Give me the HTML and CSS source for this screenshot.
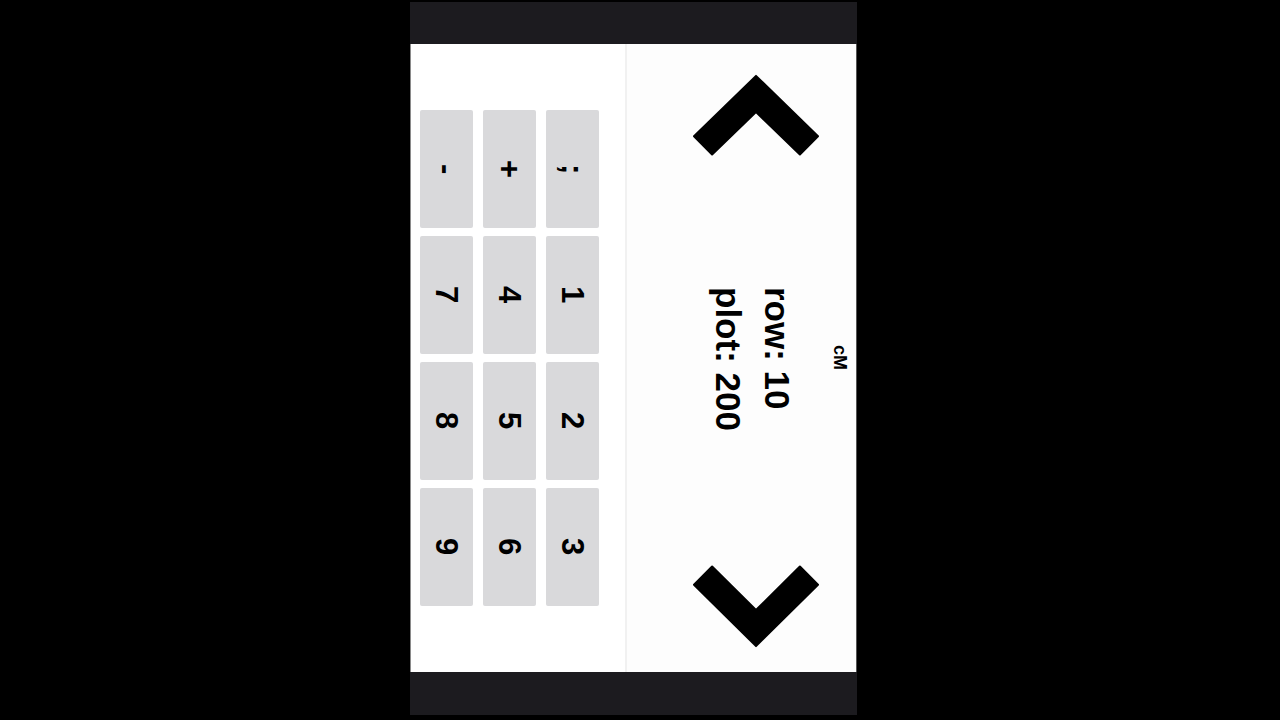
FILE: index.html
```html
<!DOCTYPE html>
<html>
<head>
<meta charset="utf-8">
<link rel="stylesheet" href="styles.css">
</head>
<body>
<div class="phone">
  <div class="bar bar-top"></div>
  <div class="screen">
    <div class="keypad">
      <div class="key"><span>-</span></div>
      <div class="key"><span>+</span></div>
      <div class="key"><span>;</span></div>
      <div class="key"><span>7</span></div>
      <div class="key"><span>4</span></div>
      <div class="key"><span>1</span></div>
      <div class="key"><span>8</span></div>
      <div class="key"><span>5</span></div>
      <div class="key"><span>2</span></div>
      <div class="key"><span>9</span></div>
      <div class="key"><span>6</span></div>
      <div class="key"><span>3</span></div>
    </div>
    <div class="panel">
      <svg class="arrow" width="126" height="84" viewBox="0 0 126 84">
        <polygon points="1,62.3 63,1.9 125,62.3 106.9,80.5 63,38 19.1,80.5" fill="#000" stroke="#000" stroke-width="2" stroke-linejoin="round"/>
      </svg>
      <div class="middle">
        <div class="info">row: 10<br>plot: 200</div>
        <div class="unit">cM</div>
      </div>
      <svg class="arrow" width="126" height="84" viewBox="0 0 126 84">
        <polygon points="1,19.7 19.1,1.5 63,45 106.9,1.5 125,19.7 63,81.1" fill="#000" stroke="#000" stroke-width="2" stroke-linejoin="round"/>
      </svg>
    </div>
  </div>
  <div class="bar bar-bottom"></div>
</div>
</body>
</html>
```

FILE: styles.css
```css
html, body {
  margin: 0;
  padding: 0;
  background: #000;
  width: 1280px;
  height: 720px;
  overflow: hidden;
  font-family: "Liberation Sans", Arial, sans-serif;
}

.phone {
  margin-left: 410px;
  margin-top: 2px;
  width: 447px;
  display: flex;
  flex-direction: column;
}

.bar {
  background: #1c1b1f;
}

.bar-top {
  height: 42px;
}

.bar-bottom {
  height: 43px;
}

.screen {
  height: 628px;
  background: #fff;
  display: flex;
  border-left: 1px solid #8a8a8a;
  border-right: 1px solid #555;
  box-sizing: border-box;
}

.keypad {
  width: 214px;
  box-sizing: border-box;
  padding: 66px 0 0 9px;
  display: grid;
  grid-template-columns: 53px 53px 53px;
  grid-auto-rows: 118px;
  column-gap: 10px;
  row-gap: 8px;
  align-content: start;
}

.key {
  background: #d9d9db;
  border-radius: 2px;
  display: flex;
  align-items: center;
  justify-content: center;
}

.key span {
  writing-mode: vertical-rl;
  font-size: 31px;
  font-weight: bold;
  line-height: 1;
  color: #000;
}

.panel {
  flex: 1;
  display: flex;
  flex-direction: column;
  border-left: 2px solid #f1f1f1;
  background: #fdfdfd;
  padding: 30px 0 23px 66px;
}

.arrow {
  display: block;
  flex: none;
  overflow: visible;
}

.middle {
  flex: 1;
  display: flex;
  align-items: center;
  padding-bottom: 7px;
}

.info {
  writing-mode: vertical-rl;
  font-size: 35px;
  font-weight: bold;
  line-height: 49px;
  margin-left: 11px;
  margin-top: 1px;
  color: #000;
  white-space: pre;
}

.unit {
  writing-mode: vertical-rl;
  font-size: 18px;
  font-weight: bold;
  line-height: 14px;
  margin-left: 31px;
  margin-top: 0;
  color: #000;
}
```
